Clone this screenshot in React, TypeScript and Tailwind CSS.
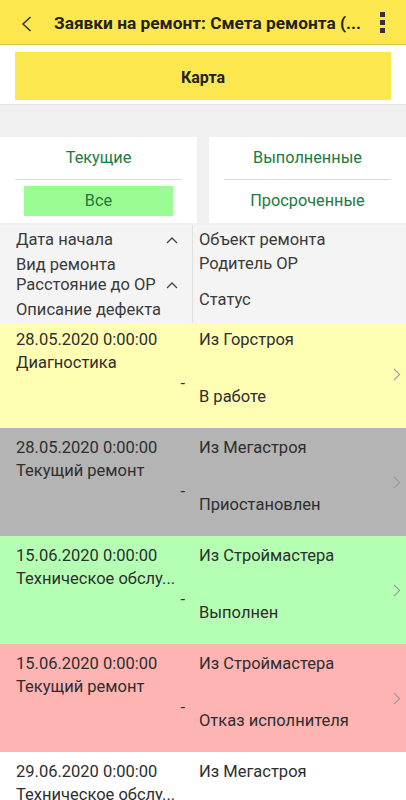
import React from "react";

const rows = [
  { bg: "bg-[#ffffb4]", date: "28.05.2020 0:00:00", type: "Диагностика", obj: "Из Горстроя", status: "В работе" },
  { bg: "bg-[#b4b4b4]", date: "28.05.2020 0:00:00", type: "Текущий ремонт", obj: "Из Мегастроя", status: "Приостановлен" },
  { bg: "bg-[#b4ffb4]", date: "15.06.2020 0:00:00", type: "Техническое обслу...", obj: "Из Строймастера", status: "Выполнен" },
  { bg: "bg-[#ffb4b4]", date: "15.06.2020 0:00:00", type: "Текущий ремонт", obj: "Из Строймастера", status: "Отказ исполнителя" },
  { bg: "bg-white", date: "29.06.2020 0:00:00", type: "Техническое обслу...", obj: "Из Мегастроя", status: "" },
];

function UpChevron() {
  return (
    <svg width="12" height="8" viewBox="0 0 12 8" className="block">
      <path d="M1 7 L6 2 L11 7" fill="none" stroke="#444" strokeWidth="1.3" />
    </svg>
  );
}

function RightChevron() {
  return (
    <svg width="8" height="13" viewBox="0 0 8 13" className="block">
      <path d="M1 0.8 L6.6 6.5 L1 12.2" fill="none" stroke="#9a9a9a" strokeWidth="1.1" />
    </svg>
  );
}

export default function App() {
  return (
    <div className="w-[406px] h-[800px] overflow-hidden bg-white text-[#333]" style={{ fontFamily: "Roboto, 'Noto Sans', sans-serif" }}>
      {/* Top bar */}
      <div className="h-[45px] bg-[#fce74f] border-b border-[#d8c64a] flex items-center pt-[4px]">
        <div className="w-[54px] flex justify-start pl-[21px]">
          <svg width="11" height="16" viewBox="0 0 11 16" className="block">
            <path d="M9.5 1 L2 8 L9.5 15" fill="none" stroke="#333" strokeWidth="1.5" />
          </svg>
        </div>
        <div className="flex-1 text-[17.3px] font-bold text-[#222] whitespace-nowrap overflow-hidden">Заявки на ремонт: Смета ремонта (...</div>
        <div className="w-[46px] flex flex-col items-center gap-[3px] pr-[2px] -mt-[4px]">
          <div className="w-[5px] h-[5px] bg-[#333]" />
          <div className="w-[5px] h-[5px] bg-[#333]" />
          <div className="w-[5px] h-[5px] bg-[#333]" />
        </div>
      </div>
      {/* Map button */}
      <div className="h-[59px] bg-white pt-[7px] px-[15px]">
        <div className="h-[48px] bg-[#fce74f] flex items-center justify-center pt-[3px] text-[16px] font-bold text-[#222]">Карта</div>
      </div>
      {/* Gray band + tabs */}
      <div className="bg-[#f0f0f0] border-t border-[#e2e2e2] pt-[32px] pb-[2px] flex gap-[12px]">
        <div className="w-[197px] h-[86px] bg-white flex flex-col px-[15px]">
          <div className="h-[42px] flex items-center justify-center text-[16.3px] text-[#1b7a3e]">Текущие</div>
          <div className="h-px bg-[#dcdcdc]" />
          <div className="pt-[6px] px-[9px]">
            <div className="h-[30px] bg-[#9cfc94] flex items-center justify-center text-[16.3px] text-[#1b7a3e]">Все</div>
          </div>
        </div>
        <div className="flex-1 h-[86px] bg-white flex flex-col px-[15px]">
          <div className="h-[42px] flex items-center justify-center text-[16.3px] text-[#1b7a3e]">Выполненные</div>
          <div className="h-px bg-[#dcdcdc]" />
          <div className="h-[43px] flex items-center justify-center text-[16.3px] text-[#1b7a3e]">Просроченные</div>
        </div>
      </div>
      {/* Table header */}
      <div className="h-[98px] bg-[#f4f4f4] flex text-[16.5px] text-[#3a3a3a] leading-[22px]">
        <div className="w-[193px] border-r border-[#e0e0e0] pl-[16px] pr-[14px]">
          <div className="h-[22px] mt-[4px] flex items-center justify-between">
            <span>Дата начала</span>
            <UpChevron />
          </div>
          <div className="h-[22px] mt-[3px]">Вид ремонта</div>
          <div className="h-[22px] -mt-[2px] flex items-center justify-between whitespace-nowrap">
            <span>Расстояние до ОР</span>
            <UpChevron />
          </div>
          <div className="h-[22px] mt-[3px] whitespace-nowrap">Описание дефекта</div>
        </div>
        <div className="flex-1 pl-[6px]">
          <div className="h-[22px] mt-[4px]">Объект ремонта</div>
          <div className="h-[22px] mt-[2px]">Родитель ОР</div>
          <div className="h-[22px] mt-[14px]">Статус</div>
        </div>
      </div>
      {/* Rows */}
      <div className="overflow-hidden">
        <div className="-mt-[3px]">
          {rows.map((r, i) => (
            <div key={i} className={`h-[108px] ${r.bg} flex text-[16.5px] text-[#2e2e2e] leading-[22px]`}>
              <div className="w-[193px] pl-[16px] pr-[8px]">
                <div className="h-[22px] mt-[9px] whitespace-nowrap">{r.date}</div>
                <div className="h-[22px] mt-[1px] whitespace-nowrap overflow-hidden">{r.type}</div>
                <div className="h-[22px] -mt-[1px] text-right">-</div>
              </div>
              <div className="flex-1 pl-[6px] flex">
                <div className="flex-1 whitespace-nowrap">
                  <div className="h-[22px] mt-[9px]">{r.obj}</div>
                  <div className="h-[22px] mt-[35px]">{r.status}</div>
                </div>
                <div className="w-[13px] pt-[48px]">
                  <RightChevron />
                </div>
              </div>
            </div>
          ))}
        </div>
      </div>
    </div>
  );
}
